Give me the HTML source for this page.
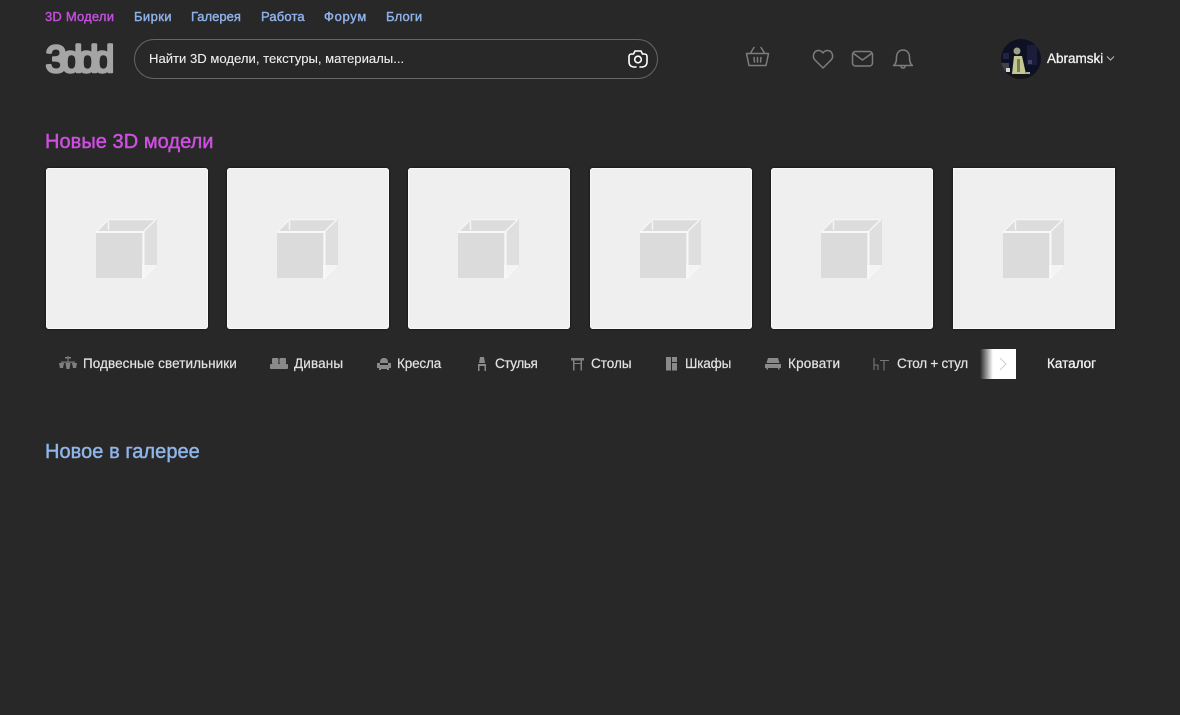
<!DOCTYPE html>
<html lang="ru">
<head>
<meta charset="utf-8">
<title>3ddd</title>
<style>
html,body{margin:0;padding:0;background:#282828}
body{position:relative;width:1180px;height:715px;overflow:hidden;font-family:"Liberation Sans",Arial,sans-serif}
.t{position:absolute;white-space:nowrap;line-height:20px;height:20px}
.nav{top:7px;font-size:13px;letter-spacing:.15px;color:#8fb2ea;-webkit-text-stroke:.4px currentColor}
.h{font-size:20px;line-height:26px;height:26px;letter-spacing:.05px;-webkit-text-stroke:.45px currentColor}
.cat{top:354px;font-size:13.5px;color:#e2e2e2;-webkit-text-stroke:.2px currentColor}
.card{position:absolute;top:168px;width:162px;height:161px;background:#efefef;border-radius:3px;box-shadow:0 0 2px #0c0c0c,inset 0 0 0 1px #f8f8f8;overflow:hidden}
.card svg{position:absolute;left:50px;top:50px}
.abs{position:absolute}
</style>
</head>
<body>
<svg width="0" height="0" style="position:absolute">
<symbol id="cube" viewBox="0 0 62 62">
<path d="M12 1H61L47 14H0Z" fill="#dcdcdc"/>
<path d="M46 15L61 1V48H46Z" fill="#dfdfdf"/>
<path d="M46 47H61L46 61Z" fill="#f4f4f4"/>
<path d="M0 14L12.500 1.500H60M47 14L60 1.500M12.500 3V12M48 60L60 47.500" fill="none" stroke="#f6f6f6" stroke-width="1.400"/>
<path d="M0 14H47.500V61" fill="none" stroke="#f8f8f8" stroke-width="2"/>
<rect x="0" y="15" width="46" height="45" fill="#dbdbdb"/>
</symbol>
</svg>

<div class="t nav" style="left:45px;color:#c24fdc;letter-spacing:.2px">3D Модели</div>
<div class="t nav" style="left:134px;letter-spacing:.4px">Бирки</div>
<div class="t nav" style="left:191px;letter-spacing:0">Галерея</div>
<div class="t nav" style="left:261px">Работа</div>
<div class="t nav" style="left:324px;letter-spacing:.7px">Форум</div>
<div class="t nav" style="left:386px;letter-spacing:.2px">Блоги</div>

<svg class="abs" style="left:42px;top:38px" width="78" height="42" viewBox="0 0 78 42">
<text x="3.500" y="34" font-family="Liberation Sans,sans-serif" font-size="38" letter-spacing="-5.200" fill="#a5a5a5" stroke="#a5a5a5" stroke-width="2.500" stroke-linejoin="round">3ddd</text>
</svg>

<div class="abs" style="left:134px;top:39px;width:522px;height:38px;border:1.500px solid #666;border-radius:20px"></div>
<div class="t" style="left:149px;top:49px;font-size:13.100px;color:#efefef;-webkit-text-stroke:.1px currentColor">Найти 3D модели, текстуры, материалы...</div>
<svg class="abs" style="left:627px;top:48px" width="22" height="22" viewBox="0 0 22 22" fill="none" stroke="#fff" stroke-width="1.600" stroke-linecap="round" stroke-linejoin="round">
<path d="M2 14V8.500C2 7 3 6 4.500 6H6.500L8 3H14L15.500 6H17.500C19 6 20 7 20 8.500V14C20 16.500 18.500 18.500 15.500 19H13M9 19H6.500C3.500 18.500 2 16.500 2 14"/>
<circle cx="11" cy="11.500" r="3.300"/>
</svg>

<svg class="abs" style="left:745px;top:46px" width="25" height="22" viewBox="0 0 25 22" fill="none" stroke="#7d7d7d" stroke-width="1.500" stroke-linecap="round" stroke-linejoin="round">
<path d="M1.500 7.500H23.500L21 19.500H4Z"/><path d="M5.500 7L9 1.500M19.500 7L16 1.500"/><path d="M9 11.500L9.500 16M12.500 11.500V16M16 11.500L15.500 16"/>
</svg>
<svg class="abs" style="left:812px;top:48px" width="22" height="22" viewBox="0 0 22 22" fill="none" stroke="#7d7d7d" stroke-width="1.500" stroke-linejoin="round">
<path d="M11 20L3 12C0 9 1.500 2.500 6.500 2.500C8.500 2.500 10 3.500 11 5C12 3.500 13.500 2.500 15.500 2.500C20.500 2.500 22 9 19 12Z"/>
</svg>
<svg class="abs" style="left:851px;top:50px" width="23" height="18" viewBox="0 0 23 18" fill="none" stroke="#7d7d7d" stroke-width="1.500" stroke-linejoin="round" stroke-linecap="round">
<rect x="1.500" y="1.500" width="20" height="14.500" rx="3"/><path d="M2.500 3.500L11.500 10L20.500 3.500"/>
</svg>
<svg class="abs" style="left:892px;top:48px" width="22" height="22" viewBox="0 0 22 22" fill="none" stroke="#7d7d7d" stroke-width="1.500" stroke-linejoin="round" stroke-linecap="round">
<path d="M1.500 17.500C4 16 4.500 13.500 4.500 9.500C4.500 5 7 2 11 2C15 2 17.500 5 17.500 9.500C17.500 13.500 18 16 20.500 17.500Z"/><path d="M9 18.500C9.300 20.500 12.700 20.500 13 18.500"/>
</svg>

<svg class="abs" style="left:1001px;top:39px" width="40" height="40" viewBox="0 0 40 40">
<defs><clipPath id="av"><circle cx="20" cy="20" r="20"/></clipPath></defs>
<g clip-path="url(#av)">
<rect width="40" height="40" fill="#0e1024"/>
<rect x="26" y="6" width="10" height="20" fill="#1a1e3a"/>
<rect x="0" y="24" width="8" height="8" fill="#3f4248"/>
<rect x="2" y="14" width="6" height="6" fill="#1f2440"/>
<rect x="0" y="34" width="40" height="6" fill="#131318"/>
<circle cx="16" cy="12" r="3.500" fill="#9d9d88"/>
<path d="M13 17L21 17L25 35H11Z" fill="#c4c78f"/>
<rect x="16" y="20" width="3" height="13" fill="#7c7d58"/>
<rect x="5" y="29" width="4" height="4" fill="#d8d8d8"/>
<rect x="25" y="33" width="4" height="2" fill="#aaa"/>
<rect x="27" y="21" width="4" height="4" fill="#3d4468"/>
</g>
</svg>
<div class="t" style="left:1047px;top:49px;font-size:13.500px;color:#f2f2f2;-webkit-text-stroke:.3px currentColor">Abramski</div>
<svg class="abs" style="left:1106px;top:55px" width="9" height="7" viewBox="0 0 9 7" fill="none" stroke="#bbb" stroke-width="1"><path d="M1 1.500L4.500 5L8 1.500"/></svg>

<div class="t h" style="left:45px;top:129px;color:#cf4fe2">Новые 3D модели</div>

<div class="card" style="left:46px"><svg width="62" height="62"><use href="#cube"/></svg></div>
<div class="card" style="left:227px"><svg width="62" height="62"><use href="#cube"/></svg></div>
<div class="card" style="left:408px"><svg width="62" height="62"><use href="#cube"/></svg></div>
<div class="card" style="left:590px"><svg width="62" height="62"><use href="#cube"/></svg></div>
<div class="card" style="left:771px"><svg width="62" height="62"><use href="#cube"/></svg></div>
<div class="card" style="left:953px;border-radius:0"><svg width="62" height="62"><use href="#cube"/></svg></div>

<svg class="abs" style="left:59px;top:356px" width="18" height="16" viewBox="0 0 18 16" fill="#808080">
<rect x="8.500" y="0" width="1" height="6"/><rect x="6" y="1" width="6" height="1.500"/><rect x="2" y="5.500" width="14" height="1.200"/>
<path d="M0 7H5L4 12H1ZM6.500 7H11.500L10.500 13H7.500ZM13 7H18L17 12H14Z"/>
</svg>
<div class="t cat" style="left:83px;letter-spacing:.07px">Подвесные светильники</div>

<svg class="abs" style="left:270px;top:357px" width="18" height="14" viewBox="0 0 18 14" fill="#8a8a8a">
<rect x="2" y="1" width="6.500" height="6" rx="1"/><rect x="9.500" y="1" width="6.500" height="6" rx="1"/><rect x="0" y="7" width="18" height="5" rx="1"/>
</svg>
<div class="t cat" style="left:294px;letter-spacing:.15px">Диваны</div>

<svg class="abs" style="left:377px;top:357px" width="14" height="14" viewBox="0 0 14 14" fill="#8a8a8a">
<path d="M3 6C3 2 4.500 1 7 1C9.500 1 11 2 11 6Z"/><path d="M0 6H3V8H11V6H14V11H12V13H10V12H4V13H2V11H0Z"/>
</svg>
<div class="t cat" style="left:397px;letter-spacing:-.15px">Кресла</div>

<svg class="abs" style="left:477px;top:357px" width="10" height="14" viewBox="0 0 10 14" fill="#8a8a8a">
<path d="M3 0H7L8 6H2Z"/><rect x="1" y="7" width="8" height="2"/><rect x="1" y="9" width="1.500" height="5"/><rect x="7.500" y="9" width="1.500" height="5"/>
</svg>
<div class="t cat" style="left:495px;letter-spacing:-.4px">Стулья</div>

<svg class="abs" style="left:571px;top:358px" width="13" height="13" viewBox="0 0 13 13" fill="#808080">
<path d="M0 0H13V2.500H0Z"/><rect x="2" y="2.500" width="1.500" height="10"/><rect x="9.500" y="2.500" width="1.500" height="10"/><rect x="3" y="5" width="7" height="1"/>
</svg>
<div class="t cat" style="left:591px">Столы</div>

<svg class="abs" style="left:666px;top:357px" width="11" height="14" viewBox="0 0 11 14" fill="#8a8a8a">
<rect x="0" y="0" width="5" height="13.500"/><rect x="6" y="0" width="5" height="5"/><rect x="6" y="6" width="5" height="7.500"/>
</svg>
<div class="t cat" style="left:685px;letter-spacing:-.15px">Шкафы</div>

<svg class="abs" style="left:765px;top:358px" width="16" height="12" viewBox="0 0 16 12" fill="#8a8a8a">
<path d="M3 0H13L14.500 5H1.500Z"/><path d="M0 6H16V10H14.500V11.500H13V10H3V11.500H1.500V10H0Z"/>
</svg>
<div class="t cat" style="left:788px;letter-spacing:.2px">Кровати</div>

<svg class="abs" style="left:873px;top:358px" width="16" height="13" viewBox="0 0 16 13" fill="none" stroke="#777" stroke-width="1.100">
<path d="M1 0V12M1 7H5V12M7 2.500H16M11 2.500V12.500"/>
</svg>
<div class="t cat" style="left:897px;letter-spacing:-.25px">Стол + стул</div>

<div class="abs" style="left:980px;top:349px;width:36px;height:30px;background:linear-gradient(90deg,rgba(255,255,255,0) 0,#fff 36%)"></div>
<svg class="abs" style="left:999px;top:357px" width="8" height="14" viewBox="0 0 8 14" fill="none" stroke="#cfcfcf" stroke-width="1"><path d="M1 1L7 7L1 13"/></svg>
<div class="t cat" style="left:1047px;color:#f5f5f5;-webkit-text-stroke:.3px currentColor">Каталог</div>

<div class="t h" style="left:45px;top:439px;color:#8fb5ea">Новое в галерее</div>
</body>
</html>
